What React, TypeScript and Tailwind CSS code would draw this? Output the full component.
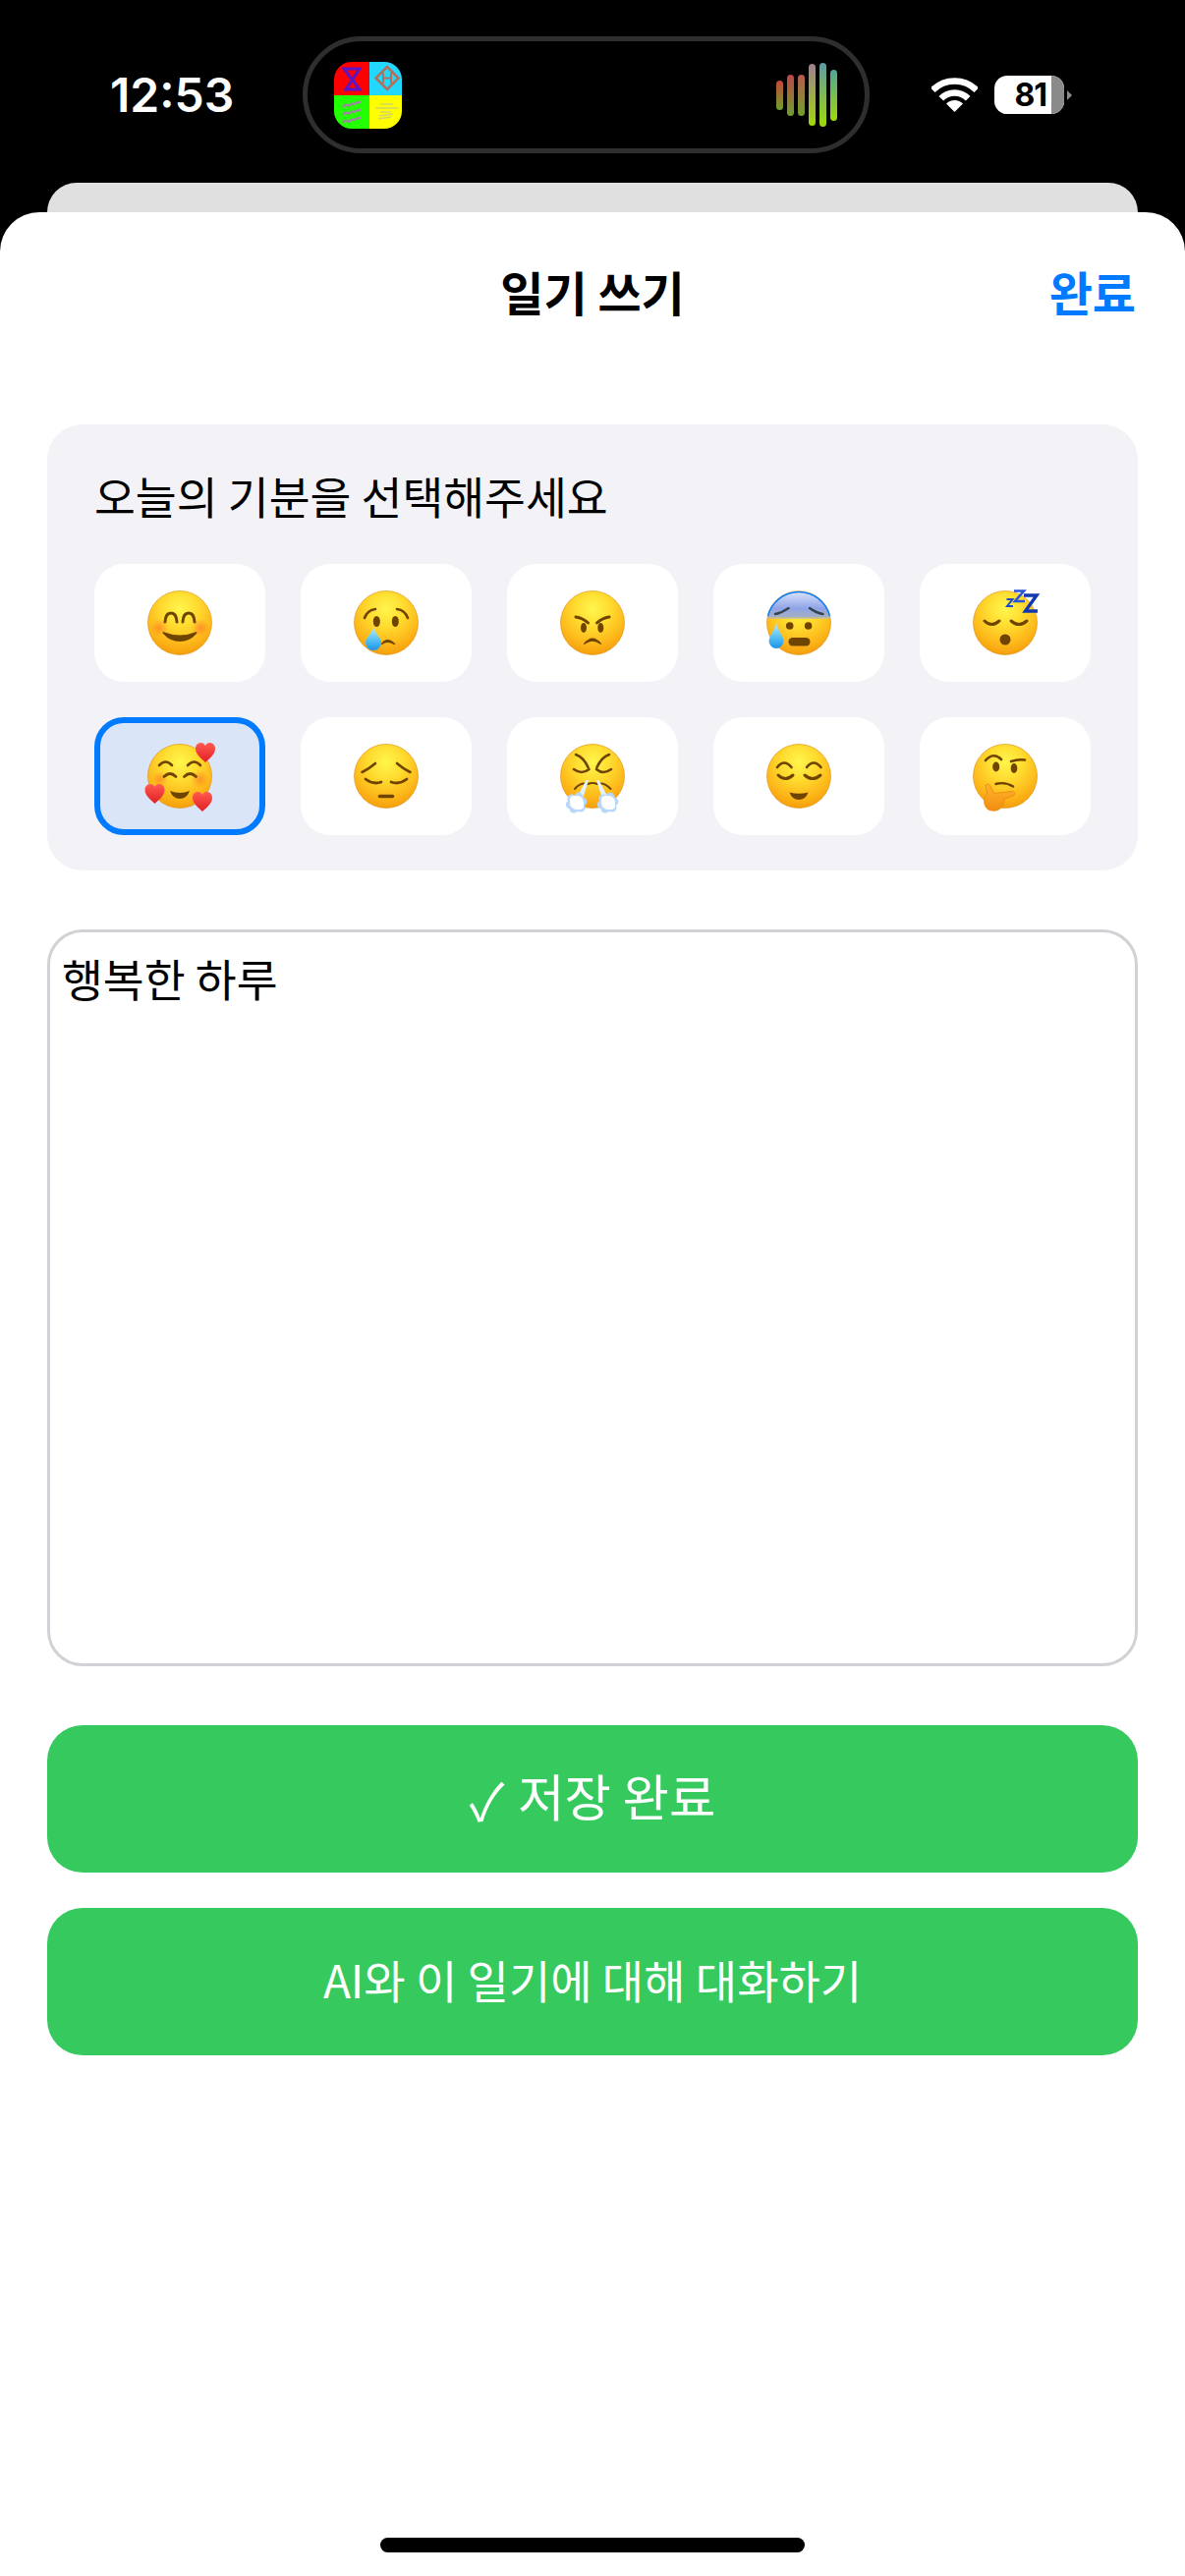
import type { ReactNode } from "react";

const BROWN = "#6f4300";
const KR = "font-['Noto_Sans_CJK_KR','Noto_Sans',sans-serif]";

function Line({ d, w = 2.6 }: { d: string; w?: number }) {
  return <path d={d} fill="none" stroke={BROWN} strokeWidth={w} strokeLinecap="round" />;
}

function Fill({ d }: { d: string }) {
  return <path d={d} fill={BROWN} />;
}

function Heart({ x, y, s = 1 }: { x: number; y: number; s?: number }) {
  return (
    <path
      transform={`translate(${x} ${y}) scale(${s})`}
      d="M0 10 C-4 6 -10 2 -10 -4 C-10 -8 -7 -10 -4.5 -10 C-2.500 -10 -1 -9 0 -7 C1 -9 2.500 -10 4.500 -10 C7 -10 10 -8 10 -4 C10 2 4 6 0 10Z"
      fill="url(#heart)"
    />
  );
}

function Drop({ x, top, y, r }: { x: number; top: number; y: number; r: number }) {
  return (
    <path
      d={`M${x} ${top} C${x + 1} ${top + 6} ${x + r} ${y - r * 0.6} ${x + r} ${y} A${r} ${r} 0 1 1 ${x - r} ${y} C${x - r} ${y - r * 0.6} ${x - 1} ${top + 6} ${x} ${top}Z`}
      fill="url(#drop)"
    />
  );
}

function Puff({ x, y }: { x: number; y: number }) {
  return (
    <g>
      {[
        [-5, -4, 4.6],
        [2, -6, 4.4],
        [6, -1, 4.4],
        [4, 5, 4.6],
        [-3, 6, 4.6],
        [-7, 2, 4.2],
      ].map(([dx, dy, r], i) => (
        <circle key={i} cx={x + dx} cy={y + dy} r={r} fill="#b9d8f8" />
      ))}
      <circle cx={x} cy={y} r={7} fill="#ffffff" />
      <circle cx={x - 3} cy={y - 3} r={4} fill="#ffffff" />
      <circle cx={x + 3} cy={y + 3} r={4} fill="#ffffff" />
    </g>
  );
}

function Face({ children }: { children: ReactNode }) {
  return (
    <svg width="80" height="80" viewBox="0 0 80 80">
      <circle cx="40" cy="40" r="32.5" fill="url(#face)" stroke="#dd8a0c" strokeWidth="0.6" />
      {children}
    </svg>
  );
}

const emojis = [
  // smiling
  <Face>
    <circle cx="19" cy="45" r="9" fill="url(#cheek)" />
    <circle cx="61" cy="45" r="9" fill="url(#cheek)" />
    <Line d="M25 39 Q25.500 30 31 30 Q36.500 30 37 39" w={3} />
    <Line d="M43 39 Q43.500 30 49 30 Q54.500 30 55 39" w={3} />
    <Fill d="M23 49 Q40 56 57 49 Q58 50 57 51 Q50 59 40 59 Q30 59 23 51 Q22 50 23 49Z" />
  </Face>,
  // crying
  <Face>
    <Line d="M18 35 Q21 27 29 26" />
    <Line d="M51 26 Q59 27 62 35" />
    <ellipse cx="30.300" cy="38.500" rx="3.500" ry="5.500" fill={BROWN} />
    <ellipse cx="49.300" cy="38.500" rx="3.500" ry="5.500" fill={BROWN} />
    <Fill d="M35 61 Q41 53 49 61 Q50 62.500 48 62 Q41 58 36 62 Q34 62.500 35 61Z" />
    <Drop x={27} top={44} y={60} r={8} />
  </Face>,
  // angry
  <Face>
    <Line d="M23 34 Q30 35 35.500 40" w={3} />
    <Line d="M57 34 Q50 35 44.500 40" w={3} />
    <ellipse cx="31" cy="45" rx="3" ry="5" fill={BROWN} />
    <ellipse cx="48.300" cy="45" rx="3" ry="5" fill={BROWN} />
    <Fill d="M31 61 Q40 50 49 61 Q49.500 62.500 47.500 61.500 Q40 56 32.500 61.500 Q30.500 62.500 31 61Z" />
  </Face>,
  // anxious with sweat
  <Face>
    <path d="M7.500 40 A32.500 32.500 0 0 1 72.500 40 Q72.500 38 72 36 H8 Q7.500 38 7.500 40Z" fill="url(#cold)" />
    <path d="M8.500 33 A32.500 32.500 0 0 1 71.500 33" fill="none" stroke="#0f7cf2" strokeWidth="1.4" />
    <path d="M16 31 Q22 30 29.500 25" fill="none" stroke="#33424f" strokeWidth="2.4" strokeLinecap="round" />
    <path d="M51 25 Q58 30 64.500 31" fill="none" stroke="#33424f" strokeWidth="2.4" strokeLinecap="round" />
    <circle cx="30.700" cy="43" r="3.800" fill={BROWN} />
    <circle cx="49.600" cy="43" r="3.800" fill={BROWN} />
    <rect x="29.500" y="55" width="22" height="8.500" rx="4.200" fill={BROWN} />
    <Drop x={17} top={40} y={58.500} r={7.500} />
  </Face>,
  // sleeping
  <Face>
    <Line d="M19 38 Q26 45 34 38" w={3} />
    <Line d="M46 38 Q54 45 62 38" w={3} />
    <circle cx="40" cy="57" r="5.500" fill={BROWN} />
    <path d="M41.500 16 H47.500 L42 23 H48" fill="none" stroke="#1f48c6" strokeWidth="2" />
    <path d="M49 7.500 H59 L50 18 H60" fill="none" stroke="#2a55d6" strokeWidth="2.600" />
    <path d="M59 12 H72 L60.500 28 H73" fill="none" stroke="#1238b0" strokeWidth="3.400" />
  </Face>,
  // smiling with hearts
  <Face>
    <circle cx="60" cy="43" r="9" fill="url(#cheek)" />
    <circle cx="20" cy="43" r="8" fill="url(#cheek)" />
    <Line d="M19 29 Q25.500 22 32 29" />
    <Line d="M48 29 Q54.500 22 61 29" />
    <Line d="M24 40.500 Q30 34.500 36 40.500" w={2.8} />
    <Line d="M44.500 40.500 Q50.500 34.500 56.500 40.500" w={2.8} />
    <Fill d="M30 55 Q40 59 50 55 Q47 63 40 63 Q33 63 30 55Z" />
    <Heart x={66} y={16} />
    <Heart x={14.500} y={58} />
    <Heart x={63} y={66} />
  </Face>,
  // pensive
  <Face>
    <Line d="M15.500 36 Q22 33 29 27" />
    <Line d="M51 27 Q58 33 64.500 36" />
    <Line d="M19 43 Q27 49 35 46" w={2.8} />
    <Line d="M45 46 Q53 49 61 43" w={2.8} />
    <Line d="M33.500 60.500 H46.500" w={3.600} />
  </Face>,
  // huffing
  <Face>
    <Line d="M23 18 Q31 21 35.500 31" />
    <Line d="M57 18 Q49 21 44.500 31" />
    <Line d="M21 33 Q29 39 36.500 33" w={2.6} />
    <Line d="M44 33 Q51 39 59 33" w={2.6} />
    <Line d="M22 53 Q28 46 35 48 Q40 46 45 48 Q52 46 58.500 53" w={2} />
    <path d="M36 44 L33.500 44 L23 64 L29 66Z" fill="#e4f1fd" />
    <path d="M44 44 L46.500 44 L57 64 L51 66Z" fill="#e4f1fd" />
    <Puff x={24} y={67} />
    <Puff x={56} y={67} />
  </Face>,
  // relieved
  <Face>
    <Line d="M18 31 Q25 22 32.500 31" />
    <Line d="M48 31 Q55 22 62.500 31" />
    <Line d="M19 39 Q26 46 34 39" w={3} />
    <Line d="M46 39 Q54 46 62 39" w={3} />
    <Fill d="M30.500 56.500 Q40 59 49.500 56.500 Q47 64 40 64 Q33 64 30.500 56.500Z" />
  </Face>,
  // thinking
  <Face>
    <Line d="M20 24 Q28 15 36 23" />
    <Line d="M46 25 Q53 22.500 60 23.500" />
    <ellipse cx="30.700" cy="30.500" rx="3.500" ry="5" fill={BROWN} />
    <ellipse cx="49" cy="32" rx="3.300" ry="5" fill={BROWN} />
    <Line d="M30.500 48 Q40 45.500 48 50.500" w={2.400} />
    <path
      d="M20 49 Q23 46.500 25 50 L28.500 57.500 L47 55.500 Q51 55.500 49 59.500 L39 63.500 Q39.500 72 31 75 Q21 76.500 19 68.500 Q17.500 62 21.500 58Z"
      fill="url(#hand)"
      stroke="#e8860f"
      strokeWidth="0.8"
    />
  </Face>,
];

function AppIcon() {
  return (
    <svg width="69" height="68" viewBox="0 0 69 68" className="rounded-[18px] shrink-0">
      <rect width="36" height="34" fill="#fe0000" />
      <rect x="36" width="33" height="34" fill="#22d8ff" />
      <rect y="34" width="36" height="34" fill="#22ff00" />
      <rect x="36" y="34" width="33" height="34" fill="#ffff00" />
      <path d="M10 7 H26 L12 28 H26 Z" fill="none" stroke="#5c14c8" strokeWidth="3" />
      <path d="M54 5 L65.500 16.500 L54 28 L42.500 16.500 Z" fill="none" stroke="#b0705c" strokeWidth="2.500" />
      <path d="M50 11 V22 M58 11 V22 M50 16.500 H58" fill="none" stroke="#b0705c" strokeWidth="2" />
      {[44, 52, 60].map((y) => (
        <path
          key={y}
          d={`M9 ${y + 2} q3 -4 6 -1 q2 -3 5 -2 q3 -2 7 -2`}
          fill="none"
          stroke="#9a8a9e"
          strokeWidth="2.400"
        />
      ))}
      <path d="M47 43 H60 M42 47 H65 M47 51 H58 M46 55 L60 53 M45 58 L58 56" fill="none" stroke="#d3d36a" strokeWidth="1.500" />
    </svg>
  );
}

function Wave() {
  const bars = [
    { y1: 82, y2: 112, c: "#c2473a" },
    { y1: 76, y2: 118, c: "#c0444a" },
    { y1: 76, y2: 118, c: "#b85a50" },
    { y1: 65, y2: 128, c: "#a07f90" },
    { y1: 64, y2: 129, c: "#5f9aa4" },
    { y1: 71, y2: 123, c: "#4fa596" },
  ];
  return (
    <svg width="62" height="67" viewBox="0 63 62 67" className="shrink-0">
      <defs>
        {bars.map((b, i) => (
          <linearGradient key={i} id={`bar${i}`} x1="0" y1="0" x2="0" y2="1">
            <stop offset="0" stopColor={b.c} />
            <stop offset="1" stopColor={i < 3 ? "#6fa02a" : "#9fd80a"} />
          </linearGradient>
        ))}
      </defs>
      {bars.map((b, i) => (
        <rect key={i} x={i * 11} y={b.y1} width="7" height={b.y2 - b.y1} rx="3.500" fill={`url(#bar${i})`} />
      ))}
    </svg>
  );
}

function WifiIcon() {
  return (
    <svg width="47" height="35" viewBox="0 0 47 35" className="shrink-0">
      <path d="M1.200 12.700 A31.500 31.500 0 0 1 45.800 12.700" fill="none" stroke="#fff" strokeWidth="6.500" />
      <path d="M9.800 21.300 A19.200 19.200 0 0 1 37.200 21.300" fill="none" stroke="#fff" strokeWidth="6.500" />
      <path d="M23.500 35 L15 26.500 A12 12 0 0 1 32 26.500 Z" fill="#fff" />
    </svg>
  );
}

export default function App() {
  return (
    <div className={`w-[1206px] h-[2622px] bg-black flex flex-col overflow-hidden ${KR}`}>
      <svg className="absolute w-0 h-0">
        <defs>
          <radialGradient id="face" cx="0.5" cy="0.28" r="0.78">
            <stop offset="0" stopColor="#fff64d" />
            <stop offset="0.35" stopColor="#ffdc30" />
            <stop offset="0.7" stopColor="#fdb81a" />
            <stop offset="0.92" stopColor="#f59f0c" />
            <stop offset="1" stopColor="#d9800a" />
          </radialGradient>
          <radialGradient id="cheek">
            <stop offset="0" stopColor="#ff6a2a" stopOpacity="0.55" />
            <stop offset="1" stopColor="#ff6a2a" stopOpacity="0" />
          </radialGradient>
          <linearGradient id="heart" x1="0" y1="0" x2="0" y2="1">
            <stop offset="0" stopColor="#ff5a50" />
            <stop offset="1" stopColor="#e01f25" />
          </linearGradient>
          <linearGradient id="drop" x1="0" y1="0" x2="0" y2="1">
            <stop offset="0" stopColor="#bdeaff" />
            <stop offset="0.6" stopColor="#4fbdf2" />
            <stop offset="1" stopColor="#1b93e6" />
          </linearGradient>
          <linearGradient id="cold" x1="0" y1="0" x2="0" y2="1">
            <stop offset="0" stopColor="#dfe6ff" />
            <stop offset="0.55" stopColor="#8ea3e6" />
            <stop offset="0.8" stopColor="#a3aec6" />
            <stop offset="1" stopColor="#ffe23c" stopOpacity="0.2" />
          </linearGradient>
          <linearGradient id="hand" x1="0" y1="0" x2="0" y2="1">
            <stop offset="0" stopColor="#ffb52e" />
            <stop offset="1" stopColor="#f28c10" />
          </linearGradient>
        </defs>
      </svg>

      {/* Status bar */}
      <div className="h-[186px] pt-[37px] pl-[112px] shrink-0">
        <div className="flex items-center h-[119px]">
          <span className="w-[196px] text-white text-[48px] font-semibold font-['Inter',sans-serif] leading-none">
            12:53
          </span>
          <div className="w-[577px] h-[119px] border-[5px] border-[#2e2e2e] rounded-full flex items-center justify-between pl-[27px] pr-[28px]">
            <AppIcon />
            <Wave />
          </div>
          <div className="ml-[63px]">
            <WifiIcon />
          </div>
          <div className="ml-[17px] w-[71px] h-[39px] rounded-[13px] overflow-hidden flex bg-white">
            <div className="w-[58px] flex items-center justify-end pr-[5px]">
              <span className="text-black text-[32px] font-bold font-['Inter',sans-serif] leading-none tracking-[-1px]">
                81
              </span>
            </div>
            <div className="w-[13px] ml-auto bg-[#8a8a8a]" />
          </div>
          <svg width="5" height="10" viewBox="0 0 5 10" className="ml-[3px]">
            <path d="M0 0 L5 5 L0 10Z" fill="#8a8a8a" />
          </svg>
        </div>
      </div>

      {/* Card behind the sheet */}
      <div className="mx-[48px] h-[30px] bg-[#e0e0e0] rounded-t-[30px] shrink-0" />

      {/* Sheet */}
      <div className="flex-1 bg-white rounded-t-[40px] flex flex-col px-[48px] pt-[52px]">
        <div className="grid grid-cols-3 items-center h-[60px]">
          <div />
          <div className="text-center text-black text-[48px] font-semibold leading-none whitespace-nowrap pb-[5px]">일기 쓰기</div>
          <div className="text-right text-[#007aff] text-[48px] font-semibold leading-none pb-[5px] pr-[2px]">완료</div>
        </div>

        <div className="mt-[104px] bg-[#f2f2f7] rounded-[36px] px-[48px] pt-[45px] pb-[36px]">
          <div className="h-[60px] flex items-center text-black text-[45.5px] leading-none whitespace-nowrap pb-[5px]">
            오늘의 기분을 선택해주세요
          </div>
          <div className="mt-[37px] grid grid-cols-5 gap-[36px]">
            {emojis.map((emoji, i) => (
              <div
                key={i}
                className={
                  i === 5
                    ? "h-[120px] rounded-[30px] flex items-center justify-center bg-[#dae5f7] border-[6px] border-[#007aff]"
                    : "h-[120px] rounded-[30px] flex items-center justify-center bg-white"
                }
              >
                {emoji}
              </div>
            ))}
          </div>
        </div>

        <div className="mt-[60px] h-[750px] border-[3px] border-[#d1d1d6] rounded-[36px] pl-[12px] pt-[14px] text-black text-[45.5px] leading-[64px]">
          행복한 하루
        </div>

        <div className="mt-[60px] flex flex-col gap-[36px]">
          <div className="h-[150px] rounded-[36px] bg-[#36ca5e] flex items-center justify-center gap-[14px] text-white text-[51.5px] leading-none pb-[9px]">
            <span className="text-[52px] translate-y-[4px]">✓</span>
            <span>저장 완료</span>
          </div>
          <div className="h-[150px] rounded-[36px] bg-[#36ca5e] flex items-center justify-center text-white text-[46px] leading-none pb-[6px]">
            AI와 이 일기에 대해 대화하기
          </div>
        </div>

        <div className="mt-[491px] mx-auto w-[432px] h-[15px] rounded-full bg-black" />
      </div>
    </div>
  );
}
